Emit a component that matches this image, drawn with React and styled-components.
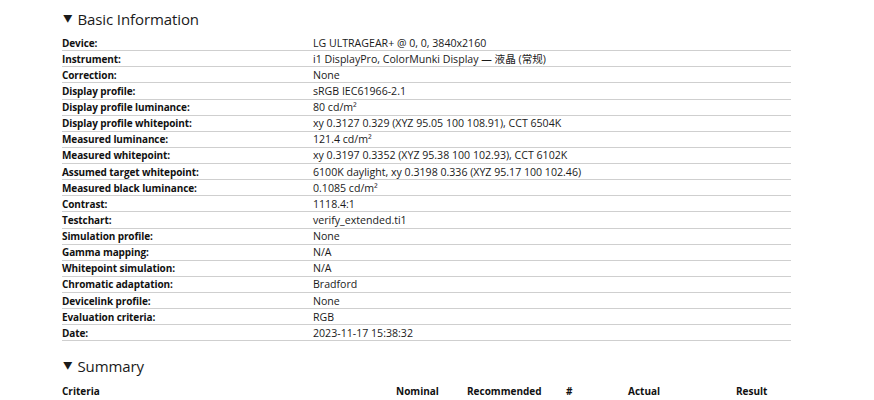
import React from "react";
import styled, { createGlobalStyle } from "styled-components";

const Global = createGlobalStyle`
  html, body { margin: 0; padding: 0; background: #fff; }
  body { font-family: "Open Sans", "Noto Sans CJK SC", sans-serif; color: #111; }
`;

const Page = styled.div`
  width: 874px;
  height: 400px;
  overflow: hidden;
  padding: 0 83px 0 62px;
  box-sizing: border-box;
`;

const Heading = styled.h2`
  margin: 0 0 ${(p) => p.$bottom}px 0;
  height: 26px;
  display: flex;
  align-items: center;
  gap: 5px;
  font-size: 15px;
  font-weight: 400;
  letter-spacing: -0.1px;
  color: #1a1a1a;
  padding-top: ${(p) => p.$top}px;
`;

const Caret = styled.span`
  font-size: 9.5px;
  margin-left: 1px;
  position: relative;
  top: -1px;
`;

const Table = styled.div`
  display: flex;
  flex-direction: column;
`;

const Row = styled.div`
  display: grid;
  grid-template-columns: 251px 1fr;
  height: 16.14px;
  box-sizing: border-box;
  border-bottom: 1px solid #cfcfcf;
  align-items: center;
  line-height: 14px;
`;

const Label = styled.div`
  font-size: 10px;
  font-weight: 700;
  letter-spacing: -0.1px;
  white-space: nowrap;
`;

const Value = styled.div`
  font-size: 10.6px;
  font-weight: 400;
  color: #1a1a1a;
  white-space: nowrap;
`;

const SummaryHead = styled.div`
  display: grid;
  grid-template-columns: 334px 71px 99px 62px 108px 1fr;
  font-size: 10px;
  line-height: 14px;
  font-weight: 700;
  margin-top: 5px;
`;

const rows = [
  ["Device:", "LG ULTRAGEAR+ @ 0, 0, 3840x2160"],
  ["Instrument:", "i1 DisplayPro, ColorMunki Display — 液晶 (常规)"],
  ["Correction:", "None"],
  ["Display profile:", "sRGB IEC61966-2.1"],
  ["Display profile luminance:", "80 cd/m²"],
  ["Display profile whitepoint:", "xy 0.3127 0.329 (XYZ 95.05 100 108.91), CCT 6504K"],
  ["Measured luminance:", "121.4 cd/m²"],
  ["Measured whitepoint:", "xy 0.3197 0.3352 (XYZ 95.38 100 102.93), CCT 6102K"],
  ["Assumed target whitepoint:", "6100K daylight, xy 0.3198 0.336 (XYZ 95.17 100 102.46)"],
  ["Measured black luminance:", "0.1085 cd/m²"],
  ["Contrast:", "1118.4:1"],
  ["Testchart:", "verify_extended.ti1"],
  ["Simulation profile:", "None"],
  ["Gamma mapping:", "N/A"],
  ["Whitepoint simulation:", "N/A"],
  ["Chromatic adaptation:", "Bradford"],
  ["Devicelink profile:", "None"],
  ["Evaluation criteria:", "RGB"],
  ["Date:", "2023-11-17 15:38:32"],
];

export default function App() {
  return (
    <>
      <Global />
      <Page>
        <Heading $top={6} $bottom={3}>
          <Caret>▼</Caret>Basic Information
        </Heading>
        <Table>
          {rows.map(([l, v]) => (
            <Row key={l}>
              <Label>{l}</Label>
              <Value>{v}</Value>
            </Row>
          ))}
        </Table>
        <Heading $top={12} $bottom={0}>
          <Caret>▼</Caret>Summary
        </Heading>
        <SummaryHead>
          <div>Criteria</div>
          <div>Nominal</div>
          <div>Recommended</div>
          <div>#</div>
          <div>Actual</div>
          <div>Result</div>
        </SummaryHead>
      </Page>
    </>
  );
}
